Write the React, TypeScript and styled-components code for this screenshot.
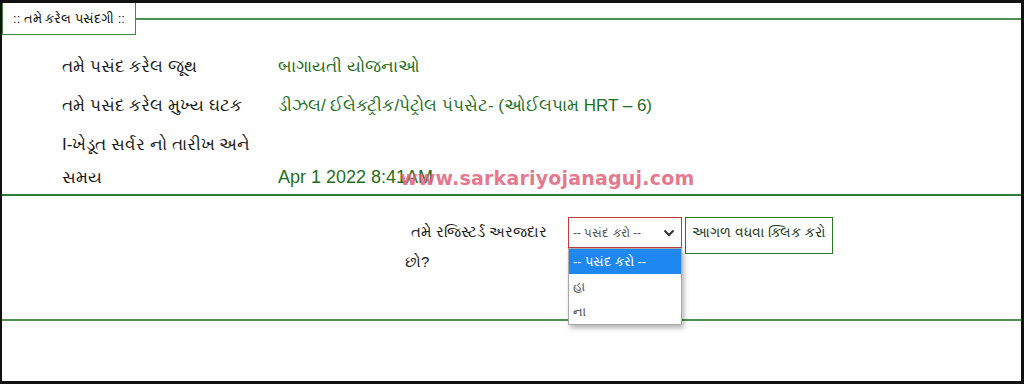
import React from "react";
import styled, { createGlobalStyle } from "styled-components";

const Global = createGlobalStyle`
  html, body {
    margin: 0;
    padding: 0;
    background: #fff;
  }
  body {
    font-family: "Liberation Sans", "Noto Sans", sans-serif;
  }
`;

const Frame = styled("div")`
  box-sizing: border-box;
  width: 1024px;
  height: 384px;
  border-top: 3px solid #111;
  border-left: 2px solid #111;
  border-right: 3px solid #111;
  border-bottom: 3px solid #111;
  background: #fff;
  position: relative;
  overflow: hidden;
  display: flex;
  flex-direction: column;
`;

const Selection = styled("section")`
  height: 193px;
  border-bottom: 2px solid #2f7d32;
  box-sizing: border-box;
  display: flex;
  flex-direction: column;
`;

const LegendRow = styled("div")`
  display: flex;
  align-items: center;
  height: 32px;
`;

const Legend = styled("div")`
  box-sizing: border-box;
  height: 32px;
  width: 134px;
  border: 1px solid #3f8a3f;
  border-top: none;
  display: flex;
  align-items: center;
  justify-content: center;
  font-size: 13px;
  color: #111;
`;

const Rule = styled("div")`
  flex: 1;
  height: 0;
  border-top: 2px solid #4f8f4f;
`;

const Rows = styled("div")`
  display: grid;
  grid-template-columns: 216px 1fr;
  padding: 15px 0 0 60px;
  row-gap: 6px;
`;

const Label = styled("div")<{ $wrap?: boolean }>`
  font-size: 17px;
  line-height: 33px;
  color: #1a1a1a;
  width: ${(p) => (p.$wrap ? "190px" : "auto")};
`;

const Value = styled("div")<{ $latin?: boolean }>`
  font-size: ${(p) => (p.$latin ? "18px" : "17px")};
  line-height: 33px;
  color: #1f6e1f;
  align-self: end;
`;

const Watermark = styled("div")`
  position: absolute;
  left: 398px;
  top: 164px;
  font-family: "DejaVu Sans", sans-serif;
  font-weight: bold;
  font-size: 19px;
  color: rgba(226, 96, 120, 0.85);
  letter-spacing: 0.2px;
  pointer-events: none;
`;

const Question = styled("section")`
  height: 125px;
  border-bottom: 2px solid #4f8f4f;
  box-sizing: border-box;
  display: flex;
  padding: 21px 0 0 403px;
  align-items: flex-start;
`;

const QLabel = styled("div")`
  width: 150px;
  margin-right: 13px;
  font-size: 15px;
  line-height: 30px;
  color: #1a1a1a;
`;

const Indent = styled("span")`
  padding-left: 6px;
`;

const SelectWrap = styled("div")`
  position: relative;
  width: 114px;
`;

const SelectBox = styled("div")`
  box-sizing: border-box;
  height: 31px;
  border: 1px solid #c23a3a;
  display: flex;
  align-items: center;
  justify-content: space-between;
  padding: 0 6px 0 4px;
  font-size: 12px;
  color: #555;
  background: #fff;
`;

const List = styled("ul")`
  position: absolute;
  top: 31px;
  left: 0;
  right: 0;
  margin: 0;
  padding: 0;
  list-style: none;
  background: #fff;
  border: 1px solid #a9a9a9;
  box-shadow: 2px 3px 5px rgba(0, 0, 0, 0.3);
  z-index: 2;
`;

const Option = styled("li")<{ $active?: boolean }>`
  height: 25px;
  line-height: 25px;
  padding-left: 4px;
  font-size: 13px;
  background: ${(p) => (p.$active ? "#1e88f0" : "#fff")};
  color: ${(p) => (p.$active ? "#fff" : "#555")};
`;

const NextButton = styled("button")`
  box-sizing: border-box;
  margin-left: 3px;
  height: 37px;
  width: 148px;
  border-width: 1px;
  border-style: solid;
  border-color: #2a7a2a;
  outline: none;
  background: #fff;
  font-family: inherit;
  font-size: 14px;
  color: #1c3d1c;
  padding: 0 4px 6px;
`;

const Chevron = () => (
  <svg width="12" height="8" viewBox="0 0 12 8">
    <path d="M1.5 1.5 L6 6 L10.5 1.5" fill="none" stroke="#333" strokeWidth="2" />
  </svg>
);

export default function App() {
  return (
    <>
      <Global />
      <Frame>
        <Selection>
          <LegendRow>
            <Legend>:: તમે કરેલ પસંદગી ::</Legend>
            <Rule />
          </LegendRow>
          <Rows>
            <Label>તમે પસંદ કરેલ જૂથ</Label>
            <Value>બાગાયતી યોજનાઓ</Value>
            <Label>તમે પસંદ કરેલ મુખ્ય ઘટક</Label>
            <Value>ડીઝલ/ ઈલેક્ટ્રીક/પેટ્રોલ પંપસેટ- (ઓઈલપામ HRT – 6)</Value>
            <Label $wrap>I-ખેડૂત સર્વર નો તારીખ અને સમય</Label>
            <Value $latin>Apr 1 2022 8:41AM</Value>
          </Rows>
        </Selection>
        <Question>
          <QLabel>
            <Indent>તમે રજિસ્ટર્ડ અરજદાર</Indent> છો?
          </QLabel>
          <SelectWrap>
            <SelectBox>
              <span>-- પસંદ કરો --</span>
              <Chevron />
            </SelectBox>
            <List>
              <Option $active>-- પસંદ કરો --</Option>
              <Option>હા</Option>
              <Option>ના</Option>
            </List>
          </SelectWrap>
          <NextButton type="button">આગળ વધવા ક્લિક કરો</NextButton>
        </Question>
        <Watermark>www.sarkariyojanaguj.com</Watermark>
      </Frame>
    </>
  );
}
